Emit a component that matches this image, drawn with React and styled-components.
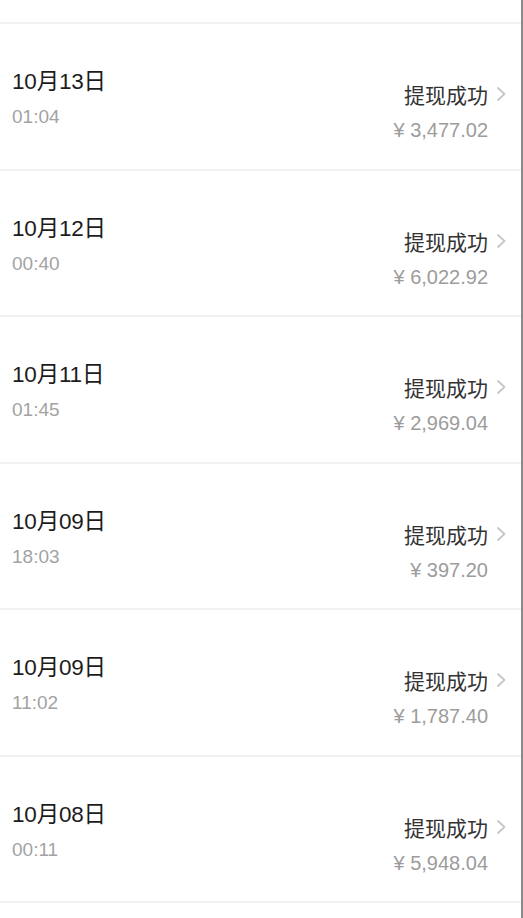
import React from "react";
import styled, { createGlobalStyle } from "styled-components";

const Global = createGlobalStyle`
  html, body { margin: 0; padding: 0; background: #ffffff; }
  body { font-family: "Liberation Sans", "Noto Sans CJK SC", sans-serif; }
`;

const Page = styled.div`
  width: 521px;
  min-height: 918px;
  background: #ffffff;
  border-right: 2px solid #8a8a8a;
  overflow: hidden;
`;

const TopSpace = styled.div`
  height: 22px;
`;

const Divider = styled.div`
  height: 2px;
  background: #f1f1f1;
`;

const Row = styled.div`
  height: 144.5px;
  box-sizing: border-box;
  display: flex;
  justify-content: space-between;
  align-items: flex-start;
  padding: 45px 13px 0 12px;
`;

const Left = styled.div`
  display: flex;
  flex-direction: column;
  gap: 11px;
`;

const DateText = styled.div`
  font-size: 22.5px;
  line-height: 26px;
  color: #1c1c1c;
  letter-spacing: -0.2px;
`;

const TimeText = styled.div`
  font-size: 19px;
  line-height: 22px;
  color: #a3a3a3;
`;

const Right = styled.div`
  display: flex;
  flex-direction: column;
  align-items: flex-end;
  padding-top: 13px;
  gap: 13px;
`;

const StatusLine = styled.div`
  display: flex;
  align-items: center;
  gap: 6px;
`;

const Status = styled.span`
  font-size: 21px;
  line-height: 24px;
  color: #333333;
  font-family: "Noto Sans CJK SC", sans-serif;
`;

const Amount = styled.div`
  font-size: 20px;
  line-height: 23px;
  color: #9c9c9c;
  margin-right: 20px;
`;

const Chevron = () => (
  <svg width="14" height="18" viewBox="0 0 14 18" fill="none">
    <path d="M4 3 L10.5 9 L4 15" stroke="#c6c6c6" strokeWidth="1.8" strokeLinecap="round" strokeLinejoin="round" />
  </svg>
);

const items = [
  { date: "10月13日", time: "01:04", amount: "¥ 3,477.02" },
  { date: "10月12日", time: "00:40", amount: "¥ 6,022.92" },
  { date: "10月11日", time: "01:45", amount: "¥ 2,969.04" },
  { date: "10月09日", time: "18:03", amount: "¥ 397.20" },
  { date: "10月09日", time: "11:02", amount: "¥ 1,787.40" },
  { date: "10月08日", time: "00:11", amount: "¥ 5,948.04" },
];

export default function App() {
  return (
    <Page>
      <Global />
      <TopSpace />
      <Divider />
      {items.map((it, i) => (
        <React.Fragment key={i}>
          <Row>
            <Left>
              <DateText>{it.date}</DateText>
              <TimeText>{it.time}</TimeText>
            </Left>
            <Right>
              <StatusLine>
                <Status>提现成功</Status>
                <Chevron />
              </StatusLine>
              <Amount>{it.amount}</Amount>
            </Right>
          </Row>
          <Divider />
        </React.Fragment>
      ))}
    </Page>
  );
}
